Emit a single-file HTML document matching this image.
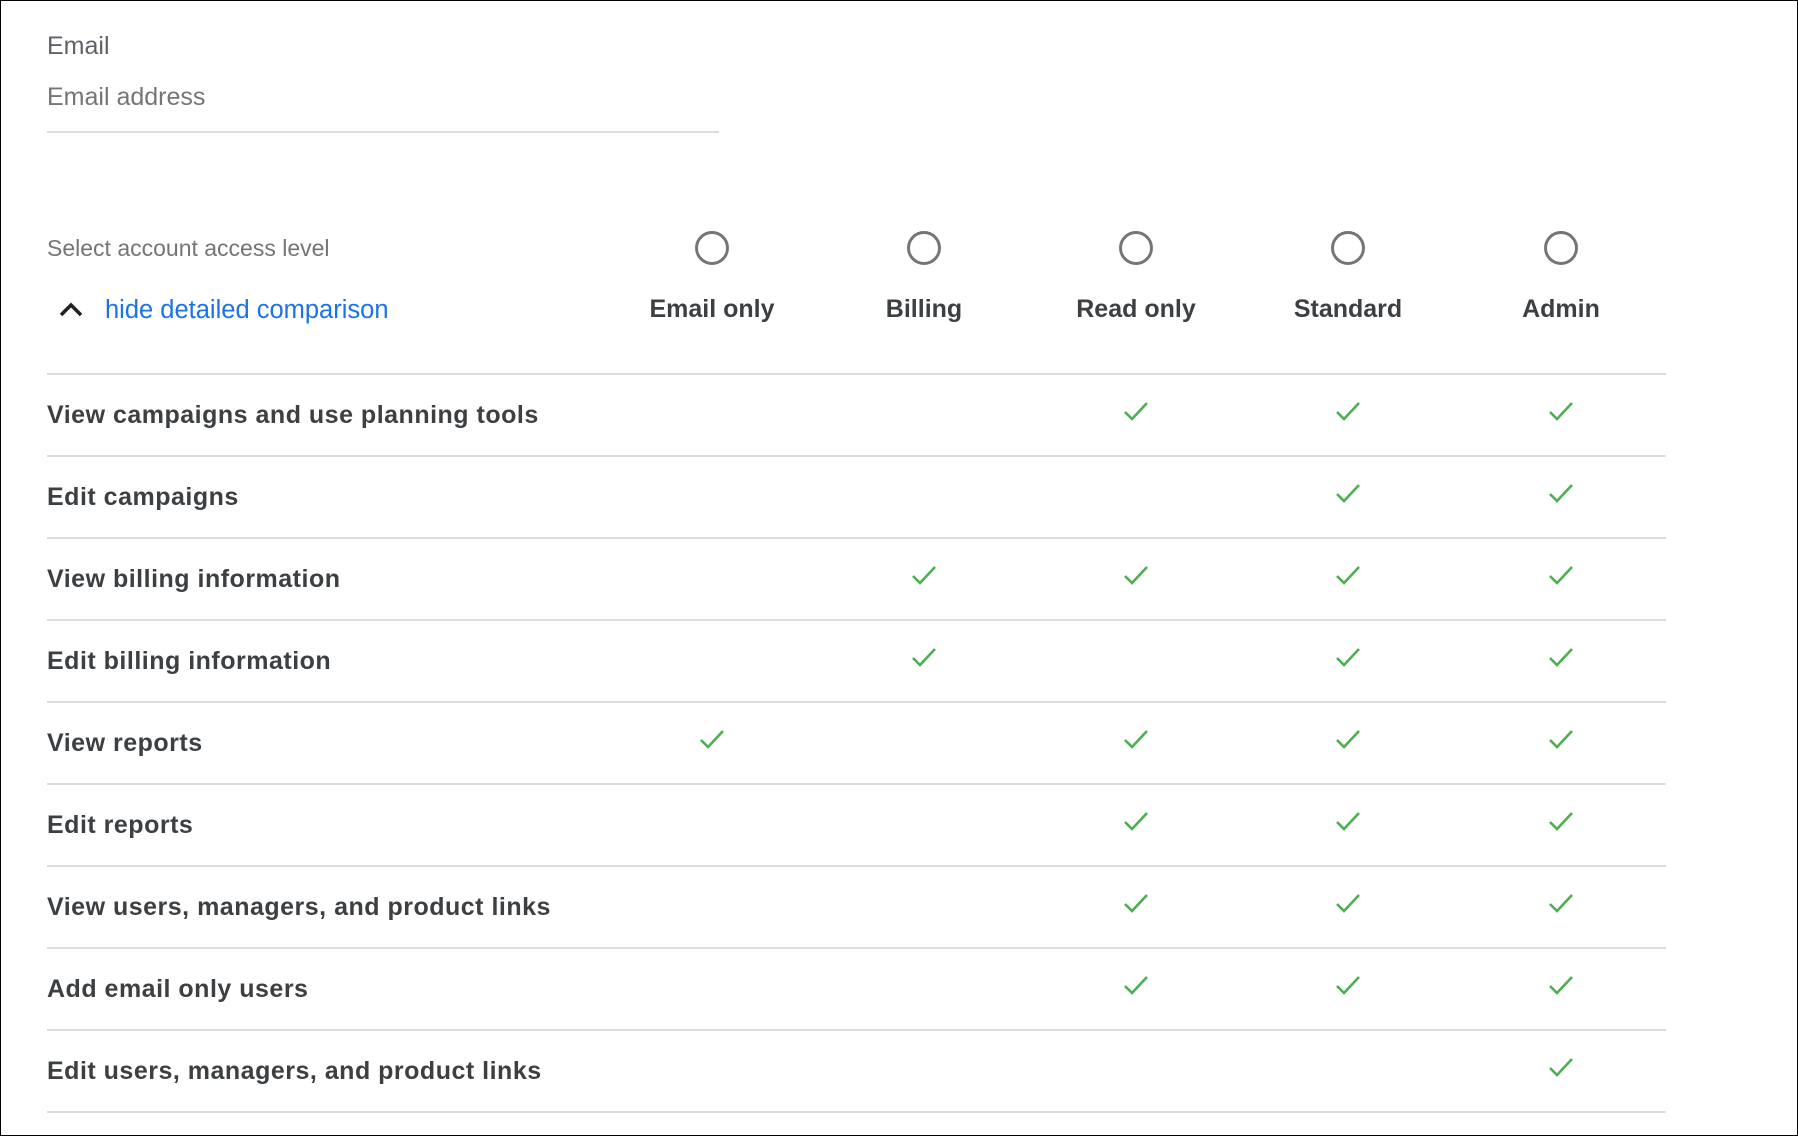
<!DOCTYPE html>
<html><head><style>
html,body{margin:0;padding:0}
body{width:1798px;height:1136px;position:relative;overflow:hidden;background:#fff;font-family:"Liberation Sans",Arial,sans-serif;}
.frame{position:absolute;left:0;top:0;width:1796px;height:1134px;border:1px solid #000;}
.t{position:absolute;white-space:nowrap;line-height:1;}
.gray{color:#757575;font-size:23px}
.hdr{color:#3c4043;font-size:25px;font-weight:bold;transform:translateX(-50%);}
.row{color:#3c4043;font-size:25px;font-weight:bold;left:47px;letter-spacing:0.5px}
.line{position:absolute;left:47px;width:1619px;height:2px;background:#dadce0}
.radio{position:absolute;width:34px;height:34px;border:3px solid #757575;border-radius:50%;box-sizing:border-box;}
</style></head><body>
<div class="frame"></div>
<div class="t gray" style="left:47px;top:34px;color:#5f6368;font-size:25px">Email</div>
<div class="t gray" style="left:47px;top:85px;font-size:25px">Email address</div>
<div style="position:absolute;left:47px;top:131px;width:672px;height:2px;background:#dadce0"></div>
<div class="t gray" style="left:47px;top:237px">Select account access level</div>
<svg style="position:absolute;left:58px;top:300px" width="26" height="18" viewBox="0 0 26 18"><path d="M3 15 L13 5 L23 15" fill="none" stroke="#202124" stroke-width="3.5"/></svg>
<div class="t" style="left:105px;top:298px;color:#1a73e8;font-size:25.5px">hide detailed comparison</div>

<div class="radio" style="left:695px;top:231px"></div>
<div class="radio" style="left:907px;top:231px"></div>
<div class="radio" style="left:1119px;top:231px"></div>
<div class="radio" style="left:1331px;top:231px"></div>
<div class="radio" style="left:1544px;top:231px"></div>
<div class="t hdr" style="left:712px;top:297px">Email only</div>
<div class="t hdr" style="left:924px;top:297px">Billing</div>
<div class="t hdr" style="left:1136px;top:297px">Read only</div>
<div class="t hdr" style="left:1348px;top:297px">Standard</div>
<div class="t hdr" style="left:1561px;top:297px">Admin</div>

<div class="line" style="top:373px"></div>
<div class="line" style="top:455px"></div>
<div class="line" style="top:537px"></div>
<div class="line" style="top:619px"></div>
<div class="line" style="top:701px"></div>
<div class="line" style="top:783px"></div>
<div class="line" style="top:865px"></div>
<div class="line" style="top:947px"></div>
<div class="line" style="top:1029px"></div>
<div class="line" style="top:1111px"></div>

<div class="t row" style="top:403px">View campaigns and use planning tools</div>
<div class="t row" style="top:485px">Edit campaigns</div>
<div class="t row" style="top:567px">View billing information</div>
<div class="t row" style="top:649px">Edit billing information</div>
<div class="t row" style="top:731px">View reports</div>
<div class="t row" style="top:813px">Edit reports</div>
<div class="t row" style="top:895px">View users, managers, and product links</div>
<div class="t row" style="top:977px">Add email only users</div>
<div class="t row" style="top:1059px">Edit users, managers, and product links</div>

<svg width="1798" height="1136" style="position:absolute;left:0;top:0" fill="none" stroke="#4caf50" stroke-width="2.6">
<defs><path id="c" d="M-11 1 L-4 8 L11 -8"/></defs>
<use href="#c" x="1136" y="411"/><use href="#c" x="1348" y="411"/><use href="#c" x="1561" y="411"/>
<use href="#c" x="1348" y="493"/><use href="#c" x="1561" y="493"/>
<use href="#c" x="924" y="575"/><use href="#c" x="1136" y="575"/><use href="#c" x="1348" y="575"/><use href="#c" x="1561" y="575"/>
<use href="#c" x="924" y="657"/><use href="#c" x="1348" y="657"/><use href="#c" x="1561" y="657"/>
<use href="#c" x="712" y="739"/><use href="#c" x="1136" y="739"/><use href="#c" x="1348" y="739"/><use href="#c" x="1561" y="739"/>
<use href="#c" x="1136" y="821"/><use href="#c" x="1348" y="821"/><use href="#c" x="1561" y="821"/>
<use href="#c" x="1136" y="903"/><use href="#c" x="1348" y="903"/><use href="#c" x="1561" y="903"/>
<use href="#c" x="1136" y="985"/><use href="#c" x="1348" y="985"/><use href="#c" x="1561" y="985"/>
<use href="#c" x="1561" y="1067"/>
</svg>
</body></html>
